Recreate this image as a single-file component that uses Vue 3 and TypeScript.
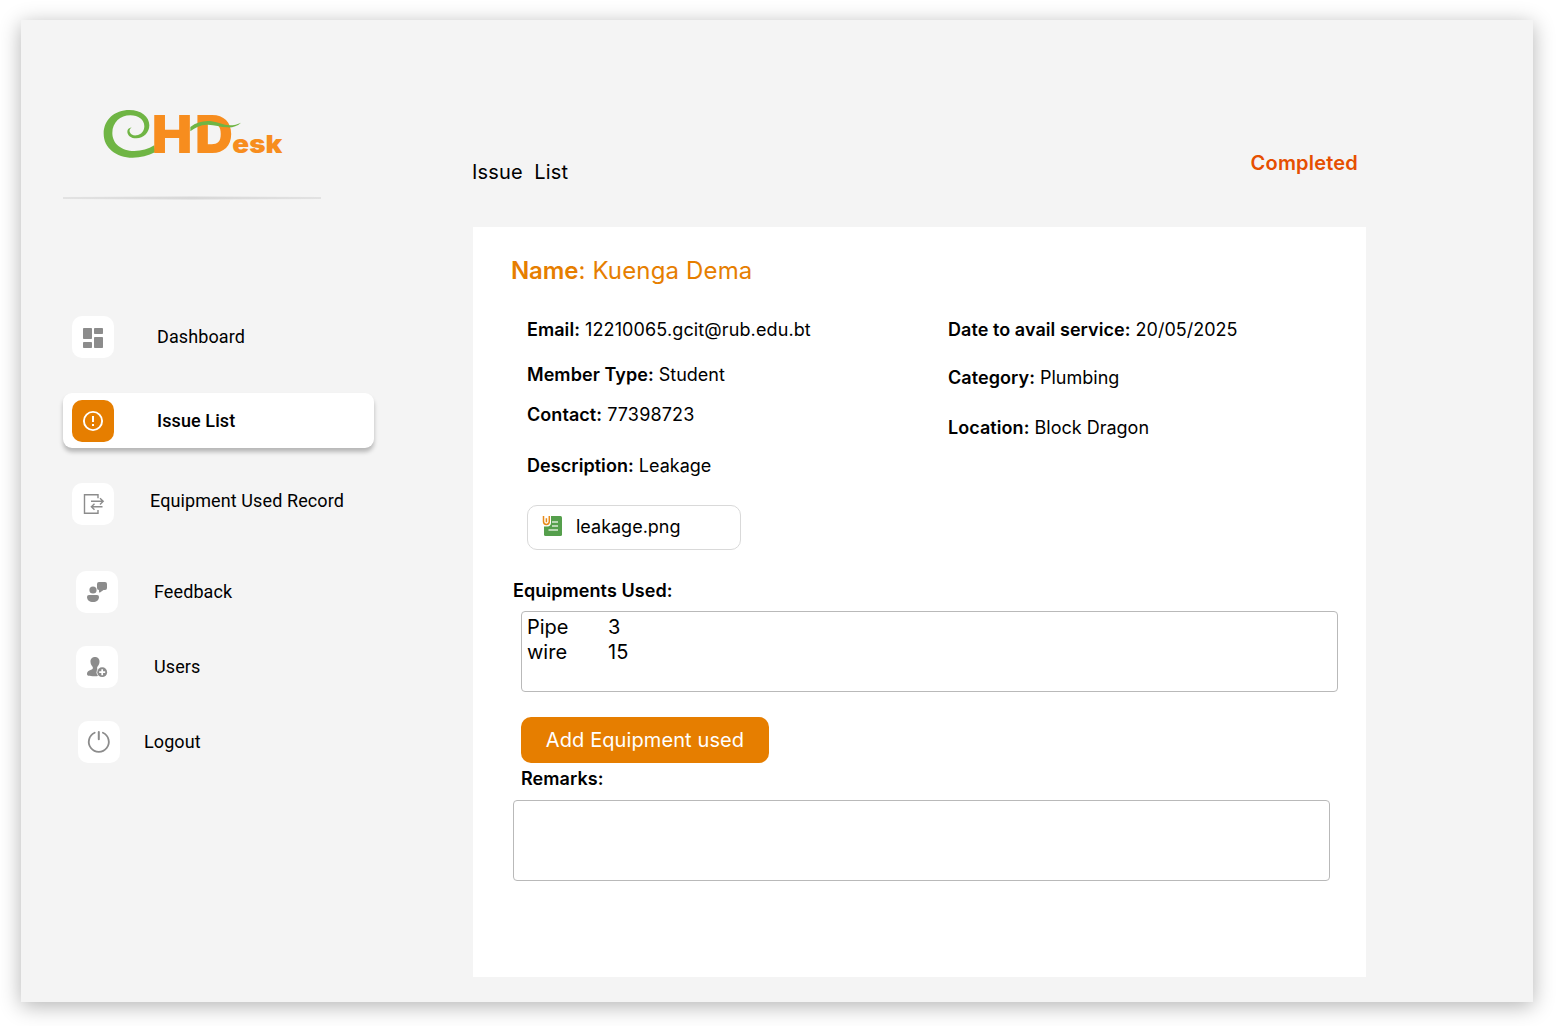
<script setup lang="ts">
interface NavItem {
  id: string
  label: string
}

interface Field {
  id: string
  label: string
  value: string
}

const navItems: NavItem[] = [
  { id: 'dashboard', label: 'Dashboard' },
  { id: 'issues', label: 'Issue List' },
  { id: 'equipment', label: 'Equipment Used Record' },
  { id: 'feedback', label: 'Feedback' },
  { id: 'users', label: 'Users' },
  { id: 'logout', label: 'Logout' },
]

const activeId = 'issues'

const personFields: Field[] = [
  { id: 'email', label: 'Email:', value: '12210065.gcit@rub.edu.bt' },
  { id: 'member', label: 'Member Type:', value: 'Student' },
  { id: 'contact', label: 'Contact:', value: '77398723' },
  { id: 'description', label: 'Description:', value: 'Leakage' },
]

const serviceFields: Field[] = [
  { id: 'date', label: 'Date to avail service:', value: '20/05/2025' },
  { id: 'category', label: 'Category:', value: 'Plumbing' },
  { id: 'location', label: 'Location:', value: 'Block Dragon' },
]

const equipment = [
  { name: 'Pipe', count: 3 },
  { name: 'wire', count: 15 },
]
</script>

<template>
  <div class="page">
    <div class="window">
      <aside class="sidebar">
        <svg class="logo" viewBox="0 0 630 225" role="img" aria-label="eHDesk">
          <path
            fill="#6fb544"
            d="M196 171 C174 182 152 188 128 188 C78 188 41 158 41 116 C41 74 74 45 118 45 C154 45 178 65 178 91 C178 113 161 130 139 130 C123 130 112 121 112 110 C112 103 117 99 125 97 C119 102 118 106 119 110 C121 118 130 122 139 121 C154 120 163 107 163 94 C163 74 145 61 121 61 C91 61 67 82 67 114 C67 146 94 168 133 168 C155 168 175 162 193 151 Z"
          />
          <text class="logo-text" x="185" y="173" font-size="158" textLength="122" lengthAdjust="spacingAndGlyphs">H</text>
          <text class="logo-text" x="315" y="173" font-size="158" textLength="114" lengthAdjust="spacingAndGlyphs">D</text>
          <text class="logo-text" x="427" y="173" font-size="75" textLength="150" lengthAdjust="spacingAndGlyphs">esk</text>
          <path
            fill="#6fb544"
            d="M301 96 C320 82 342 76 365 79 C385 82 400 90 418 91 C432 91 443 88 453 83 C441 94 427 98 412 97 C391 96 372 88 350 89 C331 90 316 97 301 109 Z"
          />
        </svg>

        <svg class="divider" viewBox="0 0 258 4">
          <defs>
            <linearGradient id="rule" x1="0" x2="1" y1="0" y2="0">
              <stop offset="0" stop-color="#e2e2e2" />
              <stop offset="0.5" stop-color="#d8d8d8" />
              <stop offset="1" stop-color="#e2e2e2" />
            </linearGradient>
          </defs>
          <path d="M0 1 L129 .5 L258 1 V3 L129 3.500 L0 3 Z" fill="url(#rule)" />
        </svg>

        <nav class="nav">
          <a
            v-for="item in navItems"
            :key="item.id"
            class="nav-item"
            :class="['nav-' + item.id, { active: item.id === activeId }]"
          >
            <span class="nav-icon">
              <svg v-if="item.id === 'dashboard'" viewBox="0 0 42 42" fill="#8c8c8c">
                <rect x="11" y="12" width="9" height="11" rx=".8" />
                <rect x="22" y="12" width="9" height="6" rx=".8" />
                <rect x="11" y="26" width="9" height="6" rx=".8" />
                <rect x="22" y="21" width="9" height="11" rx=".8" />
              </svg>
              <svg v-else-if="item.id === 'issues'" viewBox="0 0 42 42" fill="none" stroke="#fff">
                <circle cx="21" cy="21" r="9.1" stroke-width="1.9" />
                <path d="M21 16v6M21 24v2" stroke-width="2" />
              </svg>
              <svg v-else-if="item.id === 'equipment'" viewBox="0 0 42 42" fill="none" stroke="#8c8c8c" stroke-width="1.4">
                <path d="M26 15.200V11.700H12.500V30.300H26V27" />
                <path d="M19 18.300H31M28 15.200l3.200 3.100-3.200 3.100M30.500 23.700H19.500M22.500 20.700l-3.100 3 3.100 3" />
              </svg>
              <svg v-else-if="item.id === 'feedback'" viewBox="0 0 42 42" fill="#8c8c8c">
                <circle cx="17" cy="19" r="3.600" />
                <path d="M13 24h8a2 2 0 0 1 2 2c0 3-2.500 5-6 5s-6-2-6-5a2 2 0 0 1 2-2z" />
                <path d="M23 11h6a2 2 0 0 1 2 2v4a2 2 0 0 1-2 2h-1.500l-3.500 2.500c-.5.300-1 0-1-.5v-2a2 2 0 0 1-2-2v-4a2 2 0 0 1 2-2z" />
              </svg>
              <svg v-else-if="item.id === 'users'" viewBox="0 0 42 42">
                <path
                  fill="#8c8c8c"
                  d="M19 11c-3 0-4.800 2.200-4.500 5 .2 2 .8 3.300 1.900 4.500.8 1 .6 2.500-.6 3.100-2.300 1-4.800 1.600-4.800 4.400 0 1.700 1.300 2.200 8 2.200 4.200 0 8-.4 8-2.200 0-2.800-2.500-3.400-4.800-4.400-1.200-.6-1.400-2.100-.6-3.100 1.100-1.200 1.700-2.500 1.900-4.500.3-2.800-1.500-5-4.500-5z"
                />
                <circle cx="26.200" cy="26.200" r="5.700" fill="#fff" />
                <circle cx="26.200" cy="26.200" r="4.900" fill="#8c8c8c" />
                <path d="M26.200 23.200v6M23.200 26.200h6" stroke="#fff" stroke-width="1.700" />
              </svg>
              <svg v-else viewBox="0 0 42 42" fill="none" stroke="#8c8c8c" stroke-width="1.800" stroke-linecap="round">
                <path d="M16.700 11.700a10 10 0 1 0 8.200 0" />
                <path d="M20.800 11v7.200" stroke-width="2" />
              </svg>
            </span>
            <span class="nav-label">{{ item.label }}</span>
          </a>
        </nav>
      </aside>

      <main class="main">
        <header class="topbar">
          <h1>Issue&nbsp; List</h1>
          <span class="status">Completed</span>
        </header>

        <section class="card">
          <h2 class="name"><b>Name</b>: <span>Kuenga Dema</span></h2>

          <div class="details">
            <div class="column person">
              <p v-for="f in personFields" :key="f.id" :class="['field', 'f-' + f.id]">
                <b>{{ f.label }}</b> <span>{{ f.value }}</span>
              </p>
              <div class="attachment">
                <svg width="22" height="24" viewBox="0 0 22 24">
                  <rect x="2" y="2" width="18" height="20" rx="1.500" fill="#559f4c" />
                  <path d="M0 0h9v9a4 4 0 0 1-3.500 3.600H0z" fill="#fff" />
                  <path d="M10 8h6M10 12h6M6.500 16h9.500" stroke="#d9ead5" stroke-width="1.400" />
                  <path
                    d="M1.500 2v5.500a2.900 2.900 0 0 0 5.800 0V2M4.400 8.200V4.200"
                    fill="none"
                    stroke="#e88a1a"
                    stroke-width="1.500"
                  />
                </svg>
                <span>leakage.png</span>
              </div>
            </div>
            <div class="column service">
              <p v-for="f in serviceFields" :key="f.id" :class="['field', 'f-' + f.id]">
                <b>{{ f.label }}</b> <span>{{ f.value }}</span>
              </p>
            </div>
          </div>

          <h3 class="section-title">Equipments Used:</h3>
          <div class="box equipment">
            <div v-for="e in equipment" :key="e.name" class="equipment-row">
              <span class="equipment-name">{{ e.name }}</span>
              <span>{{ e.count }}</span>
            </div>
          </div>

          <button class="add" type="button">Add Equipment used</button>
          <h3 class="section-title remarks-title">Remarks:</h3>
          <div class="box remarks"></div>
        </section>
      </main>
    </div>
  </div>
</template>

<style>
body {
  background: #fff;
}
</style>

<style scoped>
* {
  box-sizing: border-box;
}

h1,
h2,
h3,
p {
  margin: 0;
}

.page {
  width: 1556px;
  height: 1026px;
  padding: 20px 0 0 21px;
  overflow: hidden;
}

.window {
  display: flex;
  width: 1512px;
  height: 982px;
  background: #f4f4f4;
  box-shadow: 0 4px 20px rgba(0, 0, 0, 0.3);
  color: #000;
  font-family: Inter, sans-serif;
}

/* Sidebar */
.sidebar {
  display: flex;
  flex-direction: column;
  align-items: flex-start;
  width: 452px;
  padding: 75px 0 0 42px;
}

.logo {
  width: 210px;
  height: 75px;
  margin-left: 27px;
}

.logo-text {
  fill: #f78d1e;
  font-family: Inter, sans-serif;
  font-weight: 900;
}

.divider {
  width: 258px;
  height: 4px;
  margin-top: 26px;
}

.nav {
  display: flex;
  flex-direction: column;
  margin-top: 109px;
}

.nav-item {
  display: flex;
  align-items: center;
  width: 311px;
  height: 55px;
  padding-left: 9px;
  border-radius: 9px;
  font-family: Roboto, sans-serif;
  font-size: 18px;
  line-height: 24px;
  letter-spacing: 0.1px;
}

.active {
  background: #fff;
  box-shadow: 0 4px 4px rgba(0, 0, 0, 0.25);
  font-weight: 500;
}

.nav-icon {
  width: 42px;
  height: 42px;
  border-radius: 10px;
  background: #fff;
}

.nav-icon svg {
  display: block;
  width: 42px;
  height: 42px;
}

.active .nav-icon {
  background: #e67e00;
}

.nav-label {
  margin-left: 43px;
  white-space: nowrap;
}

.nav-issues {
  margin-top: 29px;
}

.nav-equipment {
  margin-top: 28px;
}

.nav-equipment .nav-label {
  margin-left: 36px;
  padding-bottom: 6px;
}

.nav-feedback {
  margin-top: 33px;
  padding-left: 13px;
}

.nav-feedback .nav-label,
.nav-users .nav-label {
  margin-left: 36px;
}

.nav-users {
  margin-top: 20px;
  padding-left: 13px;
}

.nav-logout {
  margin-top: 20px;
  padding-left: 15px;
}

.nav-logout .nav-label {
  margin-left: 24px;
}

/* Main panel */
.main {
  width: 893px;
}

.topbar {
  display: flex;
  justify-content: space-between;
  height: 207px;
  padding: 128px 8px 0 0;
}

.topbar h1 {
  margin: 9px 0 0 -1px;
  font-size: 20px;
  font-weight: 400;
  line-height: 30px;
  letter-spacing: 0.15px;
}

.status {
  color: #e64f00;
  font-size: 20px;
  font-weight: 600;
  line-height: 30px;
  letter-spacing: 0.2px;
}

.card {
  height: 750px;
  padding: 29px 28px 0 38px;
  background: #fff;
}

.name {
  color: #e67e00;
  font-size: 24px;
  font-weight: 400;
  line-height: 30px;
  letter-spacing: 0.15px;
}

.name b {
  font-weight: 600;
  letter-spacing: -0.1px;
}

.details {
  display: flex;
  height: 291px;
  padding: 31px 0 0 16px;
}

.person {
  width: 421px;
}

.field {
  font-size: 18px;
  font-weight: 400;
  line-height: 26px;
  white-space: nowrap;
}

.field b {
  font-weight: 600;
  letter-spacing: 0.06px;
}

.f-email span {
  letter-spacing: 0.12px;
}

.f-member {
  margin-top: 19px;
}

.f-contact {
  margin-top: 14px;
}

.f-contact span {
  letter-spacing: 0.15px;
}

.f-description {
  margin-top: 25px;
}

.f-category {
  margin-top: 22px;
}

.f-location {
  margin-top: 24px;
}

.attachment {
  display: flex;
  align-items: center;
  width: 214px;
  height: 45px;
  margin-top: 26px;
  padding: 0 0 3px 14px;
  border: 1px solid #d9d9d9;
  border-radius: 10px;
  font-size: 18px;
}

.attachment span {
  margin-left: 12px;
}

.section-title {
  margin-left: 2px;
  font-size: 18px;
  font-weight: 600;
  line-height: 28px;
  letter-spacing: 0.08px;
}

.box {
  width: 817px;
  height: 81px;
  border: 1px solid #b9b9b9;
  border-radius: 4px;
}

.equipment {
  margin: 6px 0 0 10px;
  padding: 3px 5px;
  font-size: 20px;
  line-height: 25px;
}

.equipment-row {
  display: flex;
}

.equipment-name {
  width: 81px;
}

.add {
  display: block;
  width: 248px;
  height: 46px;
  margin: 25px 0 0 10px;
  padding: 0;
  border: 0;
  border-radius: 10px;
  background: #e67e00;
  color: #fff;
  font-family: Inter, sans-serif;
  font-size: 20px;
  font-weight: 400;
  letter-spacing: 0.1px;
}

.remarks-title {
  margin: 2px 0 0 10px;
}

.remarks {
  margin: 7px 0 0 2px;
}
</style>
